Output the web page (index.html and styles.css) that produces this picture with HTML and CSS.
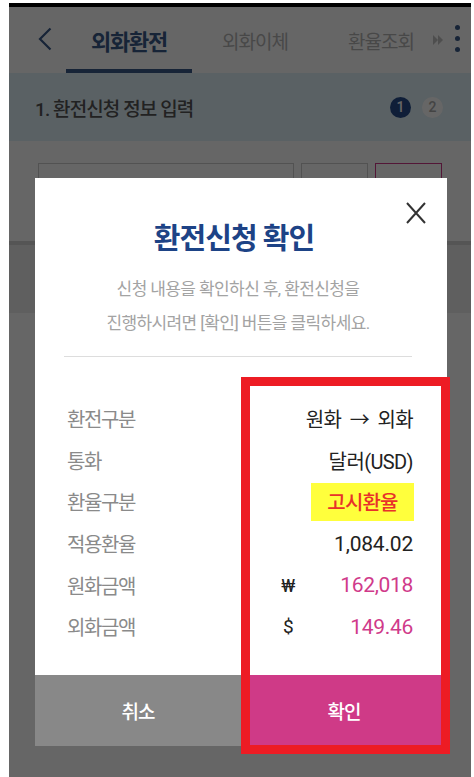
FILE: index.html
```html
<!DOCTYPE html>
<html lang="ko">
<head>
<meta charset="utf-8">
<title>외화환전</title>
<link rel="stylesheet" href="styles.css">
</head>
<body>
<div class="screen">
  <div class="statusbar"></div>
  <header class="appbar">
    <button class="back" aria-label="뒤로">
      <svg width="14" height="24" viewBox="0 0 14 24"><polyline points="12.5,1.5 2,12 12.5,22.5" fill="none" stroke="currentColor" stroke-width="2.2"/></svg>
    </button>
    <nav class="tabs">
      <a class="tab active">외화환전</a>
      <a class="tab">외화이체</a>
      <a class="tab">환율조회</a>
    </nav>
    <span class="more-hint">
      <svg width="11" height="10" viewBox="0 0 11 10"><polygon points="0,0 5,5 0,10" fill="currentColor"/><polygon points="5,0 10,5 5,10" fill="currentColor"/></svg>
    </span>
    <button class="kebab" aria-label="메뉴"><i></i><i></i><i></i></button>
  </header>
  <div class="stepbar">
    <h2 class="step-title">1. 환전신청 정보 입력</h2>
    <ol class="steps"><li class="on">1</li><li>2</li></ol>
  </div>
  <section class="form">
    <div class="field-row">
      <div class="field wide"></div>
      <div class="field"></div>
      <div class="field accent"></div>
    </div>
  </section>
  <div class="band"></div>

  <div class="dim"></div>

  <div class="modal">
    <button class="close" aria-label="닫기">
      <svg width="20" height="22" viewBox="0 0 20 22"><path d="M1 1 L19 21 M19 1 L1 21" stroke="#333" stroke-width="2" fill="none"/></svg>
    </button>
    <div class="modal-head">
      <h1 class="modal-title">환전신청 확인</h1>
      <p class="modal-desc">신청 내용을 확인하신 후, 환전신청을<br>진행하시려면 [확인] 버튼을 클릭하세요.</p>
      <hr class="divider">
    </div>
    <dl class="summary">
      <div class="row"><dt>환전구분</dt><dd class="dir">원화 → 외화</dd></div>
      <div class="row"><dt>통화</dt><dd>달러(USD)</dd></div>
      <div class="row"><dt>환율구분</dt><dd><span class="badge">고시환율</span></dd></div>
      <div class="row"><dt>적용환율</dt><dd class="rate">1,084.02</dd></div>
      <div class="row"><dt>원화금액</dt><dd class="amount"><span class="cur">₩</span><span class="num">162,018</span></dd></div>
      <div class="row"><dt>외화금액</dt><dd class="amount"><span class="cur">$</span><span class="num">149.46</span></dd></div>
    </dl>
    <div class="actions">
      <button class="btn cancel">취소</button>
      <button class="btn confirm">확인</button>
    </div>
  </div>

  <div class="highlight"></div>
</div>
</body>
</html>
```
FILE: styles.css
```css
* { box-sizing: border-box; }
html, body { margin: 0; padding: 0; background: #fff; }
body {
  font-family: Roboto, "Noto Sans CJK KR", "Noto Sans", sans-serif;
  color: #222;
}
button { font-family: inherit; border: 0; background: none; padding: 0; margin: 0; cursor: pointer; }

.screen {
  position: relative;
  margin: 3px 0 0 9px;
  width: 462px;
  height: 774px;
  background: #fff;
  overflow: hidden;
}
.statusbar { height: 4px; background: #000; }

/* app bar */
.appbar {
  position: relative;
  display: flex;
  height: 66px;
  padding-left: 29px;
  background: #fff;
}
.back {
  width: 28px;
  display: flex;
  align-items: center;
  color: #3a5a8a;
  padding-bottom: 2px;
}
.tabs { display: flex; }
.tab {
  width: 126px;
  display: flex;
  align-items: center;
  justify-content: center;
  padding-top: 4px;
  border-bottom: 4px solid transparent;
  font-size: 19px;
  letter-spacing: -1px;
  color: #b5b5b5;
}
.tab.active {
  font-size: 22px;
  font-weight: 700;
  letter-spacing: -1.2px;
  color: #3a5a8a;
  border-bottom-color: #3a5a8a;
}
.more-hint {
  position: absolute;
  left: 424px;
  top: 28px;
  color: #c4c4c4;
  display: flex;
}
.kebab {
  width: 27px;
  display: flex;
  flex-direction: column;
  align-items: center;
  justify-content: center;
  gap: 6px;
  padding-bottom: 4px;
}
.kebab i { width: 5px; height: 5px; border-radius: 50%; background: #3a5a8a; }

/* step bar */
.stepbar {
  height: 68px;
  background: #e0f2fa;
  display: flex;
  align-items: center;
  justify-content: space-between;
  padding: 0 28px 0 26px;
}
.step-title {
  margin: 0;
  font-size: 19px;
  font-weight: 500;
  letter-spacing: -0.9px;
  color: #555;
}
.steps { list-style: none; margin: 0; padding: 0; display: flex; gap: 11px; }
.steps li {
  width: 21px; height: 21px; border-radius: 50%;
  background: #fff; color: #aaa;
  font-size: 14px; font-weight: 500;
  display: flex; align-items: center; justify-content: center;
}
.steps li.on { background: #264d8c; color: #fff; }

/* form under dim */
.form {
  height: 104px;
  padding: 22px 29px 0;
  border-bottom: 4px solid #d4d4d4;
}
.field-row { display: flex; gap: 7px; }
.field { width: 67px; height: 50px; border: 1px solid #ccc; background: #fff; }
.field.wide { flex: 1; }
.field.accent { border-color: #d0398a; }
.band { height: 68px; background: #eee; }

.dim {
  position: absolute;
  left: 0; right: 0; top: 4px; bottom: 0;
  background: rgba(0, 0, 0, 0.6);
}

/* modal */
.modal {
  position: absolute;
  left: 26px;
  top: 175px;
  width: 412px;
  height: 568px;
  background: #fff;
  display: flex;
  flex-direction: column;
}
.close {
  position: absolute;
  top: 24px;
  right: 21px;
  width: 20px;
  height: 22px;
  display: flex;
}
.modal-head { padding: 41px 35px 0 29px; text-align: center; }
.modal-title {
  margin: 0 8px 0 0;
  font-size: 29px;
  line-height: 40px;
  font-weight: 700;
  letter-spacing: -1px;
  color: #1d4386;
}
.modal-desc {
  margin: 13px 0 0;
  font-size: 17px;
  line-height: 34px;
  letter-spacing: -0.6px;
  color: #a3a3a3;
}
.divider { margin: 16px 0 0; border: 0; border-top: 1px solid #ddd; height: 0; }

.summary { margin: 41px 0 0; padding: 0 34px 0 32px; }
.row {
  display: grid;
  grid-template-columns: 1fr 137px;
  align-items: center;
  height: 41.6px;
}
.row dt {
  font-size: 20px;
  letter-spacing: -1.4px;
  color: #8a8a8a;
}
.row dd {
  margin: 0;
  display: flex;
  justify-content: flex-end;
  align-items: center;
  font-size: 20px;
  letter-spacing: -0.6px;
  color: #222;
}
.row dd.dir { word-spacing: 4px; }
.row dd.rate { font-size: 21px; letter-spacing: -0.2px; }
.row dd.amount { justify-content: space-between; }
.cur { width: 24px; text-align: center; color: #222; font-size: 19px; }
.num { color: #d03a8a; font-size: 21px; letter-spacing: -0.3px; }
.badge {
  display: flex;
  align-items: center;
  justify-content: center;
  width: 103px;
  height: 38px;
  margin-right: -1px;
  background: #ffff3c;
  color: #e8322a;
  font-weight: 500;
  letter-spacing: -0.8px;
}

.actions {
  margin-top: auto;
  display: grid;
  grid-template-columns: 206px 206px;
  height: 71px;
}
.btn {
  font-size: 19px;
  font-weight: 500;
  letter-spacing: -1px;
  color: #fff;
}
.btn.cancel { background: #888; }
.btn.confirm { background: #cf3a87; }

/* annotation box */
.highlight {
  position: absolute;
  left: 232px;
  top: 374px;
  width: 209px;
  height: 377px;
  border: 9px solid #ed1c24;
}
```
